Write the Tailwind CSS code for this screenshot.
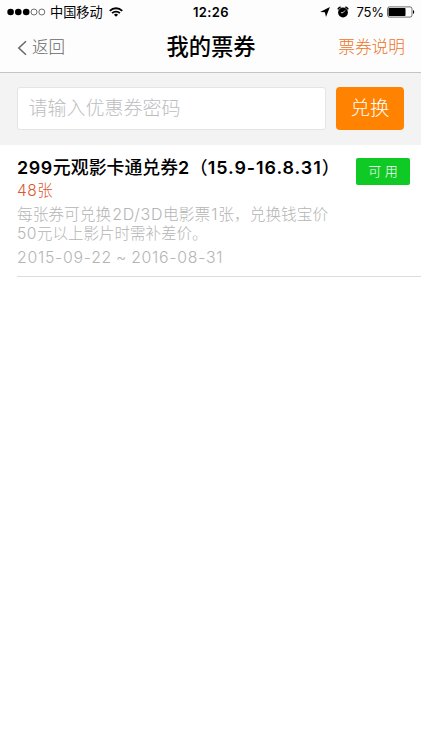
<!DOCTYPE html>
<html lang="zh-CN">
<head>
<meta charset="utf-8">
<meta name="viewport" content="width=device-width, initial-scale=1">
<title>我的票券</title>
<script src="https://cdn.jsdelivr.net/npm/@tailwindcss/browser@4"></script>
</head>
<body class="h-[750px] w-[421px] overflow-hidden bg-white font-['Inter','Noto_Sans_CJK_SC',sans-serif] text-black">
<header class="h-[73px] border-b border-[#c4c4c4] bg-[#fdfdfd]">
  <div class="grid h-6 grid-cols-[1fr_auto_1fr] items-center pl-[7px] pr-[6px]">
    <div class="flex items-center">
      <svg class="h-[8px] w-[39px]" viewBox="0 0 39 8"><g fill="#000"><circle cx="3.6" cy="4" r="3.3"/><circle cx="11.3" cy="4" r="3.3"/><circle cx="19.2" cy="4" r="3.3"/></g><g fill="none" stroke="#333" stroke-width=".7"><circle cx="27" cy="4" r="3"/><circle cx="34.8" cy="4" r="3"/></g></svg>
      <span class="ml-[4px] text-[13.2px] leading-6 whitespace-nowrap">中国移动</span>
      <svg class="ml-[6px] h-[10px] w-[14px]" viewBox="0 0 14 10" fill="none" stroke="#000" stroke-width="1.9"><path d="M.8 3.8a8.8 8.8 0 0 1 12.4 0"/><path d="M3.1 6.2a5.5 5.5 0 0 1 7.8 0"/><path d="M7 9.8 4.9 7.8a3 3 0 0 1 4.2 0Z" fill="#000" stroke="none"/></svg>
    </div>
    <span class="text-[13px] font-semibold leading-6 tracking-[.4px]">12:26</span>
    <div class="flex items-center justify-end">
      <svg class="h-[10px] w-[10px]" viewBox="0 0 10 10"><path d="M9.9.1 6 9.9 4.9 5.3.1 4.9Z"/></svg>
      <svg class="ml-[7px] h-[12px] w-[12px]" viewBox="0 0 12 12"><circle cx="6" cy="6.5" r="4.9"/><path d="M.8 3.3A6.5 6.5 0 0 1 3.6.9M8.4.9a6.5 6.5 0 0 1 2.8 2.4" stroke="#000" stroke-width="1.5" fill="none"/><path d="M8 4.5 6 6.7H4" fill="none" stroke="#fff" stroke-width=".8"/></svg>
      <span class="ml-[7px] mr-[-1px] text-[13px] leading-6 tracking-[-.1px]">75%</span>
      <svg class="ml-[4px] h-[12px] w-[28px]" viewBox="0 0 28 12"><rect x=".5" y=".9" width="24.5" height="10.2" rx="2" fill="none" stroke="#333" stroke-width=".7"/><rect x="1.5" y="2" width="17" height="8" rx=".8"/><path d="M26 4v4c1.7-.6 1.7-3.4 0-4Z"/></svg>
    </div>
  </div>
  <div class="grid h-[46px] grid-cols-[1fr_auto_1fr] items-center pl-[17px] pr-[16px]">
    <a class="flex items-center pt-px text-[16.5px] font-light text-[#666]"><svg class="mr-[5px] h-[16px] w-[10px]" viewBox="0 0 10 16" fill="none" stroke="#666" stroke-width="1.5"><path d="M9 1.2 1.8 8 9 14.8"/></svg>返回</a>
    <h1 class="text-[22.3px] font-medium leading-[46px]">我的票券</h1>
    <a class="pt-px text-right text-[16.7px] font-light text-[#ed7426]">票券说明</a>
  </div>
</header>
<main>
  <form class="flex h-[72px] gap-[10px] bg-[#f3f3f3] pl-[17px] pt-[14px]">
    <input type="text" placeholder="请输入优惠券密码" class="h-[43px] w-[309px] rounded-[3px] border border-[#e4e4e4] bg-white pl-[10.5px] text-[19px] font-light placeholder:text-[#bdbdc1]">
    <button type="button" class="h-[43px] w-[68px] rounded-[4px] bg-[#ff8200] text-[19.5px] font-light text-white">兑换</button>
  </form>
  <article class="ml-[17px] h-[132px] border-b border-[#dcdcdc] pt-[11px]">
    <div class="flex items-start justify-between pr-[11px]">
      <h2 class="h-[25px] whitespace-nowrap text-[17.9px] font-medium leading-6"><span class="font-semibold tracking-[.6px]">299</span>元观影卡通兑券<span class="font-semibold tracking-[.5px]">2</span>（<span class="font-semibold tracking-[.95px]">15.9-16.8.31</span>）</h2>
      <span class="mt-[2px] flex h-[27px] w-[54px] shrink-0 items-center justify-center rounded-[2px] bg-[#0fca25] text-[13px] font-light text-white">可 用</span>
    </div>
    <p class="-mt-[4px] text-[15.5px] font-light leading-5 text-[#dd5730]"><span class="tracking-[.5px]">48</span>张</p>
    <p class="mt-[4px] whitespace-nowrap text-[15.7px] font-light leading-[19px] text-[#b5b5b5]">每张券可兑换<span class="ml-px text-[16px] tracking-[.7px]">2D/3D</span>电影票<span class="ml-px tracking-[1px]">1</span>张，兑换钱宝价<br><span class="tracking-[.5px]">50</span><span class="text-[15.5px]">元以上影片时需补差价。</span></p>
    <p class="mt-[5px] text-[15.8px] font-light leading-[20px] tracking-[.76px] text-[#b5b5b5] [word-spacing:-1.2px]">2015-09-22 ~ 2016-08-31</p>
  </article>
</main>
</body>
</html>
